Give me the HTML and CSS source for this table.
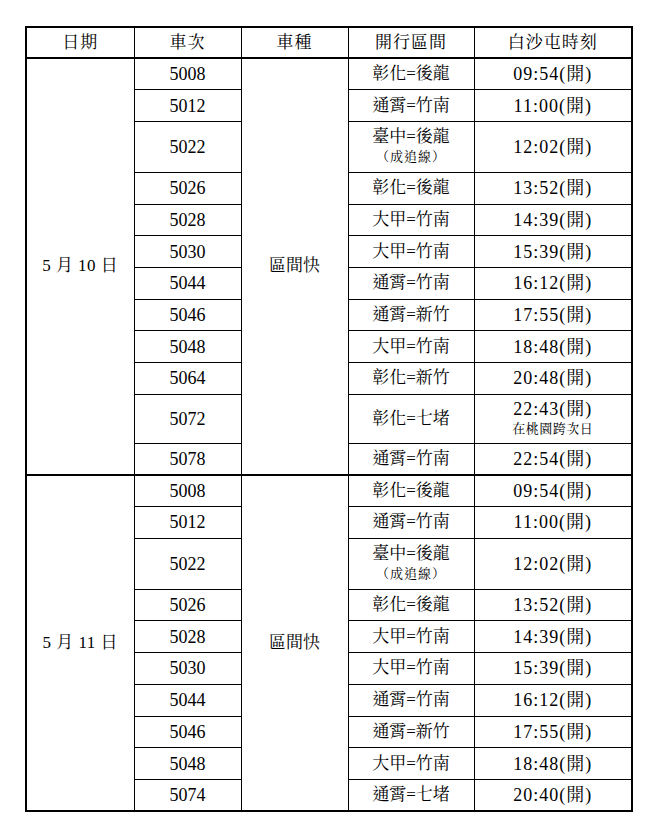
FILE: index.html
```html
<!DOCTYPE html>
<html lang="zh-Hant">
<head>
<meta charset="utf-8">
<title>白沙屯 時刻表</title>
<link rel="stylesheet" href="styles.css">
</head>
<body>
<table class="schedule">
  <colgroup>
    <col class="c-date"><col class="c-train"><col class="c-type"><col class="c-route"><col class="c-time">
  </colgroup>
  <thead>
    <tr class="head">
      <th>日期</th><th>車次</th><th>車種</th><th>開行區間</th><th>白沙屯時刻</th>
    </tr>
  </thead>
  <tbody class="group">
    <tr><td rowspan="12" class="date">5 月 10 日</td><td class="num">5008</td><td rowspan="12" class="kind">區間快</td><td>彰化=後龍</td><td class="time">09:54(開)</td></tr>
    <tr><td class="num">5012</td><td>通霄=竹南</td><td class="time">11:00(開)</td></tr>
    <tr class="tall"><td class="num">5022</td><td><div class="l1">臺中=後龍</div><div class="sub">（成追線）</div></td><td class="time">12:02(開)</td></tr>
    <tr><td class="num">5026</td><td>彰化=後龍</td><td class="time">13:52(開)</td></tr>
    <tr><td class="num">5028</td><td>大甲=竹南</td><td class="time">14:39(開)</td></tr>
    <tr><td class="num">5030</td><td>大甲=竹南</td><td class="time">15:39(開)</td></tr>
    <tr><td class="num">5044</td><td>通霄=竹南</td><td class="time">16:12(開)</td></tr>
    <tr><td class="num">5046</td><td>通霄=新竹</td><td class="time">17:55(開)</td></tr>
    <tr><td class="num">5048</td><td>大甲=竹南</td><td class="time">18:48(開)</td></tr>
    <tr><td class="num">5064</td><td>彰化=新竹</td><td class="time">20:48(開)</td></tr>
    <tr class="tall2"><td class="num">5072</td><td>彰化=七堵</td><td class="time"><div class="l1">22:43(開)</div><div class="sub note">在桃園跨次日</div></td></tr>
    <tr><td class="num">5078</td><td>通霄=竹南</td><td class="time">22:54(開)</td></tr>
  </tbody>
  <tbody class="group">
    <tr><td rowspan="10" class="date">5 月 11 日</td><td class="num">5008</td><td rowspan="10" class="kind">區間快</td><td>彰化=後龍</td><td class="time">09:54(開)</td></tr>
    <tr><td class="num">5012</td><td>通霄=竹南</td><td class="time">11:00(開)</td></tr>
    <tr class="tall"><td class="num">5022</td><td><div class="l1">臺中=後龍</div><div class="sub">（成追線）</div></td><td class="time">12:02(開)</td></tr>
    <tr><td class="num">5026</td><td>彰化=後龍</td><td class="time">13:52(開)</td></tr>
    <tr><td class="num">5028</td><td>大甲=竹南</td><td class="time">14:39(開)</td></tr>
    <tr><td class="num">5030</td><td>大甲=竹南</td><td class="time">15:39(開)</td></tr>
    <tr><td class="num">5044</td><td>通霄=竹南</td><td class="time">16:12(開)</td></tr>
    <tr><td class="num">5046</td><td>通霄=新竹</td><td class="time">17:55(開)</td></tr>
    <tr><td class="num">5048</td><td>大甲=竹南</td><td class="time">18:48(開)</td></tr>
    <tr><td class="num">5074</td><td>通霄=七堵</td><td class="time">20:40(開)</td></tr>
  </tbody>
</table>
</body>
</html>
```

FILE: styles.css
```css
html, body {
  margin: 0;
  padding: 0;
  background: #ffffff;
}

body {
  padding: 26px 0 0 25px;
  font-family: "Liberation Serif", "Noto Serif CJK TC", "Noto Sans CJK TC", serif;
  color: #000000;
}

.schedule {
  border-collapse: collapse;
  table-layout: fixed;
  width: 607px;
  border: 2px solid #000;
  font-size: 17px;
}

.c-date { width: 108px; }
.c-train { width: 107px; }
.c-type { width: 107px; }
.c-route { width: 126px; }
.c-time { width: 158px; }

.schedule th,
.schedule td {
  border: 1px solid #000;
  text-align: center;
  vertical-align: middle;
  padding: 0;
  font-weight: normal;
  line-height: 20px;
}

.head {
  height: 31px;
}

.head th {
  border-bottom: 2px solid #000;
  letter-spacing: 1px;
}

.group tr {
  height: 31.7px;
}

.group tr.tall {
  height: 51px;
}

.group tr.tall2 {
  height: 49px;
}

.group + .group tr:first-child td {
  border-top: 2px solid #000;
}

.schedule .num {
  font-size: 18px;
}

.schedule .time {
  font-size: 18px;
  letter-spacing: 1px;
}

.date {
  letter-spacing: 0.5px;
}

.l1 {
  line-height: 20px;
}

.sub {
  font-size: 13px;
  line-height: 20px;
  letter-spacing: 1px;
}

.sub.note {
  letter-spacing: 0.5px;
}
```
